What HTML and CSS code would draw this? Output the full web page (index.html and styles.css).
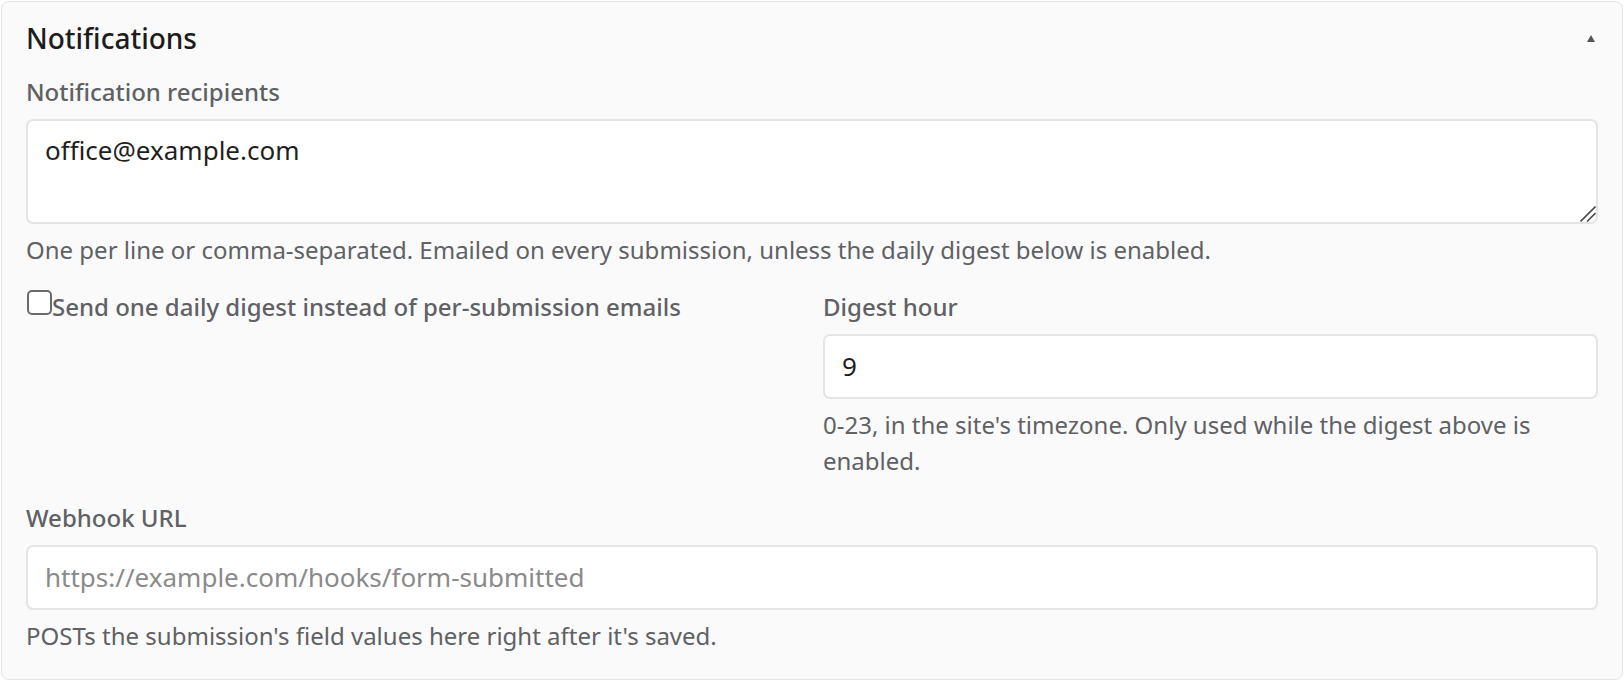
FILE: index.html
```html
<!DOCTYPE html>
<html lang="en">
<head>
    <meta charset="UTF-8">
    <meta name="viewport" content="width=device-width, initial-scale=1.0">
    <title>Notifications</title>
    <link rel="stylesheet" href="styles.css">
</head>
<body>
    <section class="panel">
        <div class="panel-header">
            <h2 class="panel-title">Notifications</h2>
            <span class="toggle" aria-label="Collapse"></span>
        </div>

        <div class="field">
            <label class="field-label" for="recipients">Notification recipients</label>
            <div class="textarea-wrap">
                <textarea id="recipients" class="control textarea">office@example.com</textarea>
                <!-- resize grip, drawn at the page's scale -->
                <svg class="grip" width="16" height="16" viewBox="0 0 16 16" aria-hidden="true">
                    <path d="M0.5 15.5L15.5 0.5M7 15.5L15.5 7" stroke="#4d4d4d" stroke-width="1.6" fill="none"/>
                </svg>
            </div>
            <div class="help">One per line or comma-separated. Emailed on every submission, unless the daily digest below is enabled.</div>
        </div>

        <div class="row">
            <div class="field">
                <label class="check">
                    <input type="checkbox" class="check-box">Send one daily digest instead of per-submission emails
                </label>
            </div>
            <div class="field">
                <label class="field-label" for="digest-hour">Digest hour</label>
                <input id="digest-hour" class="control" type="text" value="9">
                <div class="help">0-23, in the site's timezone. Only used while the digest above is enabled.</div>
            </div>
        </div>

        <div class="field last">
            <label class="field-label" for="webhook">Webhook URL</label>
            <input id="webhook" class="control" type="text" placeholder="https://example.com/hooks/form-submitted">
            <div class="help">POSTs the submission's field values here right after it's saved.</div>
        </div>
    </section>
</body>
</html>
```

FILE: styles.css
```css
:root {
    --panel-bg: #fafafa;
    --border: #e4e4e4;
    --text-dark: #1c1c1c;
    --text-muted: #5f6165;
    --text-input: #1f1f1f;
}

* {
    box-sizing: border-box;
}

body {
    margin: 0;
    padding: 1px;
    font-family: 'Noto Sans', 'Open Sans', sans-serif;
    background-color: #ffffff;
}

.panel {
    background-color: var(--panel-bg);
    border: 1px solid var(--border);
    border-radius: 8px;
    padding: 20px 24px 25px;
}

.panel-header {
    display: flex;
    justify-content: space-between;
    align-items: center;
    margin-bottom: 18px;
}

.panel-title {
    margin: 0;
    font-size: 28px;
    font-weight: 500;
    line-height: 1.2;
    color: var(--text-dark);
}

.toggle {
    width: 0;
    height: 0;
    margin-right: 3px;
    border-left: 4px solid transparent;
    border-right: 4px solid transparent;
    border-bottom: 7px solid #555555;
}

.field {
    margin-bottom: 21px;
}

.field.last {
    margin-bottom: 0;
}

.field-label {
    display: block;
    margin-bottom: 9px;
    font-size: 24px;
    font-weight: 500;
    line-height: 36px;
    color: var(--text-muted);
}

.control {
    display: block;
    width: 100%;
    height: 65px;
    padding: 0 17px;
    font-family: inherit;
    font-size: 26px;
    color: var(--text-input);
    background-color: #ffffff;
    border: 2px solid var(--border);
    border-radius: 7px;
    outline: none;
}

.control::placeholder {
    color: #8a8a8a;
}

.textarea-wrap {
    position: relative;
    margin-top: 1px;
}

.textarea {
    height: 105px;
    padding: 10px 17px;
    line-height: 39px;
    resize: none;
}

.grip {
    position: absolute;
    right: 2px;
    bottom: 2px;
    pointer-events: none;
}

.help {
    margin-top: 8px;
    font-size: 24px;
    line-height: 36px;
    color: var(--text-muted);
}

.row {
    display: grid;
    grid-template-columns: 1fr 1fr;
    gap: 22px;
}

.check {
    display: flex;
    align-items: flex-start;
    font-size: 24px;
    font-weight: 500;
    line-height: 36px;
    color: var(--text-muted);
}

.check-box {
    appearance: none;
    flex: none;
    width: 25px;
    height: 25px;
    margin: 1px 0 0 1px;
    background-color: #ffffff;
    border: 2px solid #6a6a6a;
    border-radius: 5px;
}
```
